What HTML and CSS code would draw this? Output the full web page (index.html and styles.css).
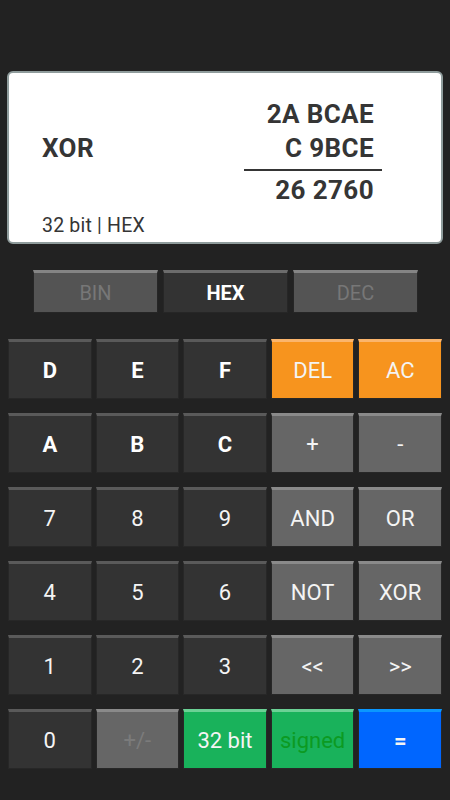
FILE: index.html
```html
<!DOCTYPE html>
<html lang="en">

<head>
    <meta charset="UTF-8">
    <meta name="viewport" content="width=device-width, initial-scale=1.0">
    <title>Programmer Calculator</title>
    <link rel="stylesheet" href="styles.css">
</head>

<body>
    <main id="main">
        <section class="display">
            <div class="calc">
                <span class="op">XOR</span>
                <div class="operands">
                    <span class="line">2A BCAE</span>
                    <span class="line">C 9BCE</span>
                    <hr class="rule">
                    <span class="line result">26 2760</span>
                </div>
            </div>
            <span class="footer">32 bit | HEX</span>
        </section>

        <div class="modes">
            <button class="mode">BIN</button>
            <button class="mode active">HEX</button>
            <button class="mode">DEC</button>
        </div>

        <div class="keypad">
            <button class="key hex">D</button>
            <button class="key hex">E</button>
            <button class="key hex">F</button>
            <button class="key orange">DEL</button>
            <button class="key orange">AC</button>

            <button class="key hex">A</button>
            <button class="key hex">B</button>
            <button class="key hex">C</button>
            <button class="key gray">+</button>
            <button class="key gray">-</button>

            <button class="key">7</button>
            <button class="key">8</button>
            <button class="key">9</button>
            <button class="key gray">AND</button>
            <button class="key gray">OR</button>

            <button class="key">4</button>
            <button class="key">5</button>
            <button class="key">6</button>
            <button class="key gray">NOT</button>
            <button class="key gray">XOR</button>

            <button class="key">1</button>
            <button class="key">2</button>
            <button class="key">3</button>
            <button class="key gray">&lt;&lt;</button>
            <button class="key gray">&gt;&gt;</button>

            <button class="key">0</button>
            <button class="key gray disabled">+/-</button>
            <button class="key green">32 bit</button>
            <button class="key green signed">signed</button>
            <button class="key blue">=</button>
        </div>
    </main>
</body>

</html>
```

FILE: styles.css
```css
* {
    box-sizing: border-box;
    margin: 0;
    padding: 0;
    font-family: Roboto, "Liberation Sans", Arial, sans-serif;
}

body {
    background-color: #222222;
    width: 450px;
    height: 800px;
    overflow: hidden;
}

main {
    padding-top: 71px;
}

/* display panel */
.display {
    margin: 0 7px;
    height: 173px;
    background-color: white;
    border: 2px solid #8f9c9c;
    border-radius: 6px;
    padding-left: 33px;
    display: flex;
    flex-direction: column;
    color: #353535;
}

.calc {
    display: flex;
    justify-content: space-between;
    margin-top: 24px;
}

.op {
    margin-top: 34px;
    font-size: 26px;
    font-weight: bold;
    line-height: 34px;
    letter-spacing: .4px;
}

.operands {
    width: 138px;
    margin-right: 59px;
    display: flex;
    flex-direction: column;
    text-align: right;
}

.line {
    font-size: 26px;
    font-weight: bold;
    line-height: 34px;
    letter-spacing: .4px;
    padding-right: 8px;
}

.rule {
    border: none;
    height: 2px;
    background-color: #353535;
    margin-top: 4px;
}

.result {
    margin-top: 2px;
}

.footer {
    margin-top: 8px;
    font-size: 19.5px;
    line-height: 22px;
    letter-spacing: .2px;
}

/* number system switch */
.modes {
    display: flex;
    gap: 5px;
    margin: 26px 0 0 33px;
}

.mode {
    width: 125px;
    height: 43px;
    border: 1px solid #262626;
    border-top: 3px solid #858585;
    background-color: #545454;
    color: #777777;
    font-size: 20px;
}

.mode.active {
    background-color: #333333;
    border-top-color: #6c6c6c;
    color: white;
    font-weight: bold;
}

/* keys */
.keypad {
    display: grid;
    grid-template-columns: repeat(5, 1fr);
    grid-auto-rows: 60px;
    column-gap: 4px;
    row-gap: 14px;
    margin: 26px 8px 0;
}

.key {
    background-color: #333333;
    border: 1px solid #272727;
    border-top: 3px solid #5a5a5a;
    color: #f4f4f4;
    font-size: 22px;
}

.hex {
    font-weight: bold;
    color: white;
}

.gray {
    background-color: #666666;
    border-top-color: #8a8a8a;
}

.disabled {
    color: #7b7b7b;
}

.orange {
    background-color: #f7941e;
    border-top-color: #fbb56c;
}

.green {
    background-color: #19b25b;
    border-top-color: #6bd195;
}

.signed {
    color: #0c9a22;
}

.blue {
    background-color: #0066ff;
    border-top-color: #0a97ff;
    font-weight: bold;
}
```
